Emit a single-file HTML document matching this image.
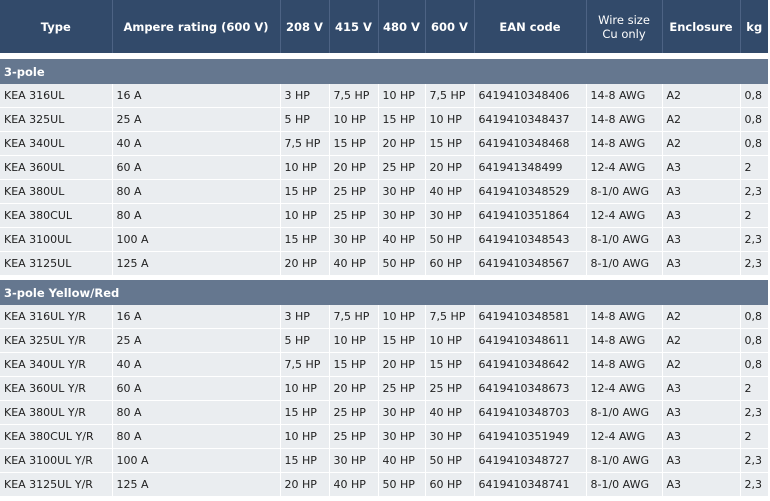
<!DOCTYPE html><html><head><style>
body{margin:0;background:#fff;width:770px;height:501px;overflow:hidden;font-family:"DejaVu Sans","Liberation Sans",sans-serif;font-size:11px;color:#222}
table{border-collapse:collapse;table-layout:fixed;width:768px;position:absolute;left:0}
td,th{padding:0 0 0 4px;white-space:nowrap;overflow:hidden}
th{background:#324a6a;color:#fff;font-weight:bold;font-size:11.5px;height:53px;border-left:1px solid #4d6384;text-align:center;padding:0}
th:first-child{border-left:none}
th.n{font-weight:normal}
td{background:#eaedf0;height:23px;border-bottom:1px solid #fff;border-left:1px solid #fff}
td:first-child{border-left:none}
tr.s td{background:#65778f;color:#fff;font-weight:bold;font-size:11.5px;height:25px;border:none}
</style></head><body>
<table style="top:0"><colgroup><col style="width:112px"><col style="width:168px"><col style="width:49px"><col style="width:49px"><col style="width:47px"><col style="width:49px"><col style="width:112px"><col style="width:76px"><col style="width:78px"><col style="width:28px"></colgroup>
<tr><th>Type</th><th>Ampere rating (600 V)</th><th>208 V</th><th>415 V</th><th>480 V</th><th>600 V</th><th>EAN code</th><th class="n">Wire size<br>Cu only</th><th>Enclosure</th><th>kg</th></tr></table>
<table style="top:59px"><colgroup><col style="width:112px"><col style="width:168px"><col style="width:49px"><col style="width:49px"><col style="width:47px"><col style="width:49px"><col style="width:112px"><col style="width:76px"><col style="width:78px"><col style="width:28px"></colgroup>
<tr class="s"><td colspan="10">3-pole</td></tr>
<tr><td>KEA 316UL</td><td>16 A</td><td>3 HP</td><td>7,5 HP</td><td>10 HP</td><td>7,5 HP</td><td>6419410348406</td><td>14-8 AWG</td><td>A2</td><td>0,8</td></tr>
<tr><td>KEA 325UL</td><td>25 A</td><td>5 HP</td><td>10 HP</td><td>15 HP</td><td>10 HP</td><td>6419410348437</td><td>14-8 AWG</td><td>A2</td><td>0,8</td></tr>
<tr><td>KEA 340UL</td><td>40 A</td><td>7,5 HP</td><td>15 HP</td><td>20 HP</td><td>15 HP</td><td>6419410348468</td><td>14-8 AWG</td><td>A2</td><td>0,8</td></tr>
<tr><td>KEA 360UL</td><td>60 A</td><td>10 HP</td><td>20 HP</td><td>25 HP</td><td>20 HP</td><td>641941348499</td><td>12-4 AWG</td><td>A3</td><td>2</td></tr>
<tr><td>KEA 380UL</td><td>80 A</td><td>15 HP</td><td>25 HP</td><td>30 HP</td><td>40 HP</td><td>6419410348529</td><td>8-1/0 AWG</td><td>A3</td><td>2,3</td></tr>
<tr><td>KEA 380CUL</td><td>80 A</td><td>10 HP</td><td>25 HP</td><td>30 HP</td><td>30 HP</td><td>6419410351864</td><td>12-4 AWG</td><td>A3</td><td>2</td></tr>
<tr><td>KEA 3100UL</td><td>100 A</td><td>15 HP</td><td>30 HP</td><td>40 HP</td><td>50 HP</td><td>6419410348543</td><td>8-1/0 AWG</td><td>A3</td><td>2,3</td></tr>
<tr><td>KEA 3125UL</td><td>125 A</td><td>20 HP</td><td>40 HP</td><td>50 HP</td><td>60 HP</td><td>6419410348567</td><td>8-1/0 AWG</td><td>A3</td><td>2,3</td></tr>
</table>
<table style="top:280px"><colgroup><col style="width:112px"><col style="width:168px"><col style="width:49px"><col style="width:49px"><col style="width:47px"><col style="width:49px"><col style="width:112px"><col style="width:76px"><col style="width:78px"><col style="width:28px"></colgroup>
<tr class="s"><td colspan="10">3-pole Yellow/Red</td></tr>
<tr><td>KEA 316UL Y/R</td><td>16 A</td><td>3 HP</td><td>7,5 HP</td><td>10 HP</td><td>7,5 HP</td><td>6419410348581</td><td>14-8 AWG</td><td>A2</td><td>0,8</td></tr>
<tr><td>KEA 325UL Y/R</td><td>25 A</td><td>5 HP</td><td>10 HP</td><td>15 HP</td><td>10 HP</td><td>6419410348611</td><td>14-8 AWG</td><td>A2</td><td>0,8</td></tr>
<tr><td>KEA 340UL Y/R</td><td>40 A</td><td>7,5 HP</td><td>15 HP</td><td>20 HP</td><td>15 HP</td><td>6419410348642</td><td>14-8 AWG</td><td>A2</td><td>0,8</td></tr>
<tr><td>KEA 360UL Y/R</td><td>60 A</td><td>10 HP</td><td>20 HP</td><td>25 HP</td><td>25 HP</td><td>6419410348673</td><td>12-4 AWG</td><td>A3</td><td>2</td></tr>
<tr><td>KEA 380UL Y/R</td><td>80 A</td><td>15 HP</td><td>25 HP</td><td>30 HP</td><td>40 HP</td><td>6419410348703</td><td>8-1/0 AWG</td><td>A3</td><td>2,3</td></tr>
<tr><td>KEA 380CUL Y/R</td><td>80 A</td><td>10 HP</td><td>25 HP</td><td>30 HP</td><td>30 HP</td><td>6419410351949</td><td>12-4 AWG</td><td>A3</td><td>2</td></tr>
<tr><td>KEA 3100UL Y/R</td><td>100 A</td><td>15 HP</td><td>30 HP</td><td>40 HP</td><td>50 HP</td><td>6419410348727</td><td>8-1/0 AWG</td><td>A3</td><td>2,3</td></tr>
<tr><td>KEA 3125UL Y/R</td><td>125 A</td><td>20 HP</td><td>40 HP</td><td>50 HP</td><td>60 HP</td><td>6419410348741</td><td>8-1/0 AWG</td><td>A3</td><td>2,3</td></tr>
</table>
</body></html>
